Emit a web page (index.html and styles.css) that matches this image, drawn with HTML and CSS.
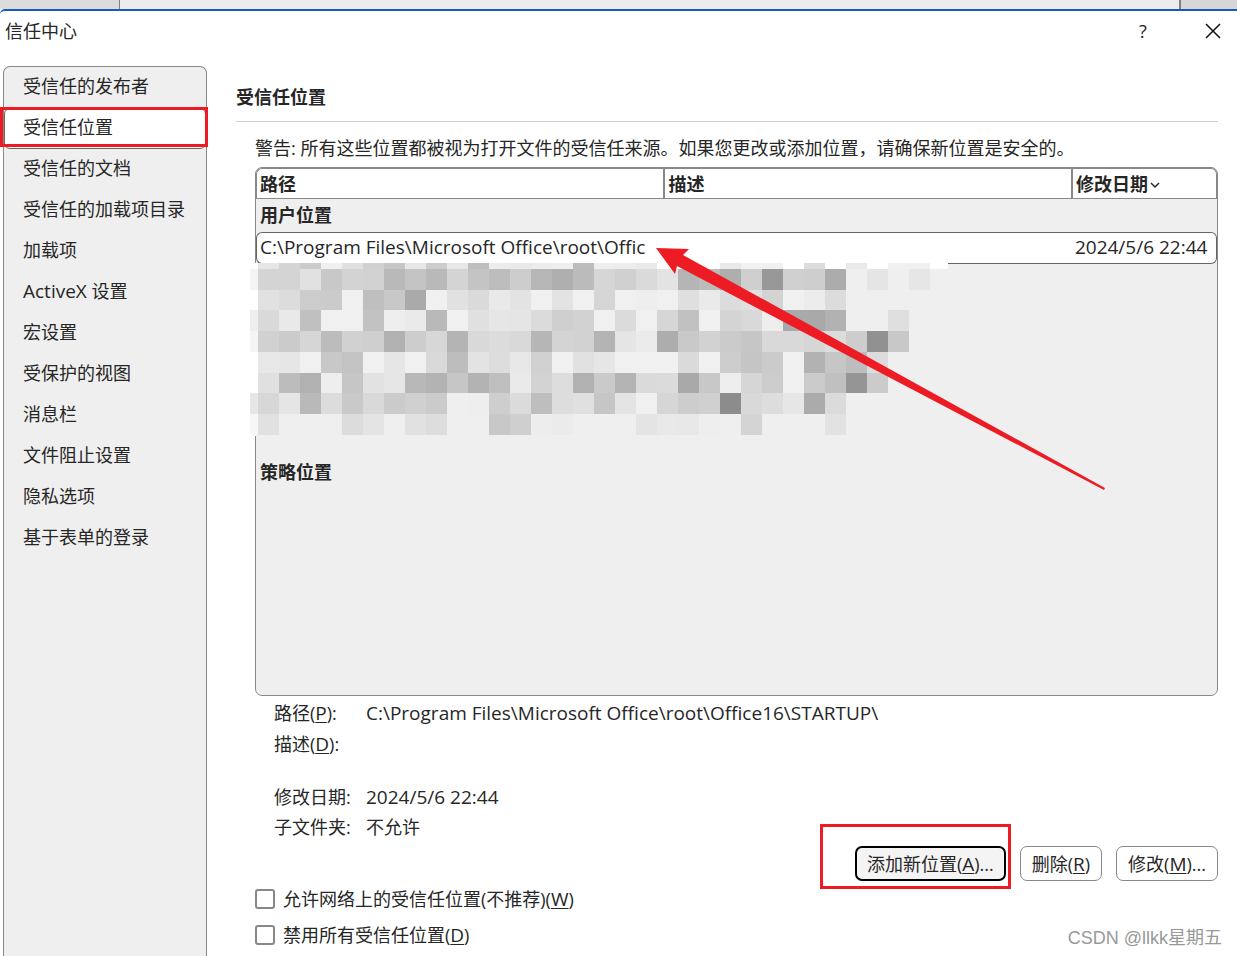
FILE: index.html
```html
<!DOCTYPE html>
<html lang="zh-CN">

<head>
    <meta charset="UTF-8">
    <title>信任中心</title>
    <link rel="stylesheet" href="styles.css">
</head>

<body>
    <div class="backdrop">
        <div class="backdrop-page"></div>
    </div>
    <div class="dialog">
        <header class="titlebar">
            <span class="title">信任中心</span>
            <button type="button" class="title-btn help" aria-label="帮助">?</button>
            <button type="button" class="title-btn" aria-label="关闭">
                <svg width="16" height="16" viewBox="0 0 16 16"><path d="M1 1 L15 15 M15 1 L1 15" fill="none" stroke="#111" stroke-width="1.5"/></svg>
            </button>
        </header>
        <div class="main">
            <nav class="sidebar">
                <a href="#">受信任的发布者</a>
                <a href="#" class="selected">受信任位置</a>
                <a href="#">受信任的文档</a>
                <a href="#">受信任的加载项目录</a>
                <a href="#">加载项</a>
                <a href="#"><span class="latin">ActiveX</span> 设置</a>
                <a href="#">宏设置</a>
                <a href="#">受保护的视图</a>
                <a href="#">消息栏</a>
                <a href="#">文件阻止设置</a>
                <a href="#">隐私选项</a>
                <a href="#">基于表单的登录</a>
            </nav>
            <section class="content">
                <h1>受信任位置</h1>
                <div class="body">
                    <p class="warning">警告: 所有这些位置都被视为打开文件的受信任来源。如果您更改或添加位置，请确保新位置是安全的。</p>
                    <div class="list">
                        <table>
                            <thead>
                                <tr>
                                    <th class="wide">路径</th>
                                    <th class="wide">描述</th>
                                    <th>修改日期<svg class="sort" width="10" height="8" viewBox="0 0 10 8"><path d="M1 1 L5 5 L9 1" fill="none" stroke="#262626" stroke-width="1.5"/></svg></th>
                                </tr>
                            </thead>
                            <tbody>
                                <tr class="group"><td colspan="3">用户位置</td></tr>
                                <tr class="active">
                                    <td class="latin">C:\Program Files\Microsoft Office\root\Offic</td>
                                    <td></td>
                                    <td class="latin">2024/5/6 22:44</td>
                                </tr>
                                <tr class="hidden-rows"><td colspan="3"><svg id="mosaic" class="mosaic" width="698" height="173"></svg></td></tr>
                                <tr class="group"><td colspan="3">策略位置</td></tr>
                            </tbody>
                        </table>
                        <svg class="arrow" width="452" height="246" viewBox="0 0 452 246"><path d="M1 1 L34 2 L28 8 L450 241 L449 243 L22 19 L20 27 Z" fill="#ed1c24"/></svg>
                    </div>
                    <dl class="details">
                        <dt>路径(<u>P</u>):</dt>
                        <dd class="latin">C:\Program Files\Microsoft Office\root\Office16\STARTUP\</dd>
                        <dt>描述(<u>D</u>):</dt>
                        <dd></dd>
                        <dt class="later">修改日期:</dt>
                        <dd class="latin later">2024/5/6 22:44</dd>
                        <dt>子文件夹:</dt>
                        <dd>不允许</dd>
                    </dl>
                    <div class="buttons">
                        <div class="marked"><button type="button" class="default">添加新位置(<u>A</u>)...</button></div>
                        <button type="button">删除(<u>R</u>)</button>
                        <button type="button">修改(<u>M</u>)...</button>
                    </div>
                    <div class="checks">
                        <label><input type="checkbox"><span>允许网络上的受信任位置(不推荐)(<u>W</u>)</span></label>
                        <label><input type="checkbox"><span>禁用所有受信任位置(<u>D</u>)</span></label>
                    </div>
                </div>
            </section>
        </div>
        <div class="watermark">CSDN @llkk星期五</div>
    </div>
    <script src="mosaic.js"></script>
</body>

</html>
```
FILE: styles.css
```css
*,
*::after {
    box-sizing: border-box;
}

body {
    margin: 0;
    height: 100vh;
    display: flex;
    flex-direction: column;
    overflow: hidden;
    background-color: #fff;
    color: #262626;
    font-family: "Open Sans", "Noto Sans CJK SC", sans-serif;
    font-size: 18px;
    line-height: 30px;
}

button,
input {
    font: inherit;
    color: inherit;
}

u {
    font-size: 19px;
    text-underline-offset: 2px;
    text-decoration-thickness: 1px;
}

.latin {
    font-size: 19px;
}

/* window behind the dialog */
.backdrop {
    flex: none;
    height: 9px;
    padding: 0 56px 0 119px;
    background: linear-gradient(90deg, #dcdcdc, #d6d6d6);
}

.backdrop-page {
    height: 9px;
    border-left: 1px solid #808080;
    border-right: 2px solid #808080;
    background-color: #ededed;
}

.dialog {
    position: relative;
    flex: 1;
    min-height: 0;
    display: flex;
    flex-direction: column;
    border-top: 2px solid #185abd;
    border-top-left-radius: 5px;
    background-color: #fff;
}

.titlebar {
    display: flex;
    align-items: center;
    height: 40px;
    padding: 0 7px 0 5px;
}

.title {
    flex: 1;
}

.title-btn {
    display: flex;
    align-items: center;
    justify-content: center;
    width: 34px;
    height: 34px;
    margin-left: 36px;
    padding: 0;
    border: none;
    background: none;
}

.main {
    flex: 1;
    min-height: 0;
    display: flex;
    padding: 15px 19px 0 3px;
}

.sidebar {
    flex: none;
    width: 204px;
    border: 1px solid #888;
    border-bottom: none;
    border-radius: 7px 7px 0 0;
    background-color: #efefef;
}

.sidebar a {
    display: block;
    height: 41px;
    padding-left: 19px;
    color: inherit;
    line-height: 38px;
    text-decoration: none;
}

.sidebar a.selected {
    position: relative;
    border: 1px solid #666;
    border-radius: 6px;
    padding-left: 18px;
    background-color: #fff;
    line-height: 36px;
}

.sidebar a.selected::after {
    content: "";
    position: absolute;
    top: -2px;
    left: -5px;
    right: -3px;
    height: 40px;
    border: 3px solid #ed1c24;
}

.content {
    flex: 1;
    min-width: 0;
    padding-left: 29px;
}

h1 {
    margin: 0;
    padding: 16px 0 9px;
    border-bottom: 1px solid #d0d0d0;
    font-size: 18px;
    line-height: 30px;
}

.body {
    padding-left: 19px;
}

.warning {
    margin: 0;
    padding: 11px 0 4px;
    white-space: nowrap;
}

.list {
    position: relative;
    height: 529px;
    border: 1px solid #888;
    border-radius: 7px;
    background-color: #efefef;
}

table {
    width: 100%;
    table-layout: fixed;
    border-collapse: separate;
    border-spacing: 0;
    line-height: 28px;
}

th,
td {
    padding: 0 4px;
    text-align: left;
    white-space: nowrap;
}

th {
    height: 31px;
    border-top: 1px solid #888;
    border-bottom: 1px solid #888;
    border-left: 2px solid #888;
    padding: 0 3px;
    background-color: #fff;
}

th:first-child {
    border-left-width: 1px;
    border-top-left-radius: 6px;
}

th:last-child {
    border-right: 1px solid #888;
    border-top-right-radius: 6px;
}

th.wide {
    width: 42.4%;
}

.sort {
    margin-left: 2px;
    vertical-align: middle;
}

.group td {
    height: 33px;
    padding-bottom: 2px;
    font-weight: 700;
}

.active td {
    height: 32px;
    border-top: 1px solid #666;
    border-bottom: 1px solid #666;
    padding-bottom: 2px;
    background-color: #fff;
}

.active td:first-child {
    border-left: 1px solid #666;
    border-radius: 6px 0 0 6px;
    padding-left: 3px;
}

.active td:last-child {
    border-right: 1px solid #666;
    border-radius: 0 6px 6px 0;
}

.hidden-rows td {
    position: relative;
    height: 192px;
}

.mosaic {
    position: absolute;
    top: -1px;
    left: -6px;
}

.arrow {
    position: absolute;
    top: 79px;
    left: 399px;
}

.details {
    display: grid;
    grid-template-columns: 92px 1fr;
    grid-auto-rows: minmax(31px, auto);
    margin: 0;
    padding: 2px 0 0 19px;
}

.details dd {
    margin: 0;
}

.details .later {
    margin-top: 22px;
}

.buttons {
    display: flex;
    justify-content: flex-end;
    gap: 14px;
    margin-top: 3px;
}

.buttons button {
    height: 35px;
    padding: 0 11px;
    border: 1px solid #888;
    border-radius: 7px;
    background-color: #fff;
    line-height: 30px;
}

.buttons button.default {
    border: 2px solid #000;
    padding: 0 10px;
    background-color: #f4f4f4;
}

.marked {
    position: relative;
}

.marked::after {
    content: "";
    position: absolute;
    top: -22px;
    right: -5px;
    bottom: -8px;
    left: -35px;
    border: 3px solid #ed1c24;
}

.checks label {
    display: flex;
    align-items: center;
    height: 36px;
}

.checks input {
    appearance: none;
    width: 20px;
    height: 20px;
    margin: 0 8px 0 0;
    border: 2px solid #888;
    border-radius: 3px;
    background-color: #fff;
}

.watermark {
    position: absolute;
    right: 15px;
    bottom: 3px;
    color: #999;
    font-family: "Liberation Sans", "Noto Sans CJK SC", sans-serif;
}
```
FILE: mosaic.js
```js
// Grey levels of the blurred rows; the first value is the narrow strip on the left
var rows = [
    "ff e6 d4 cb f0 e0 d1 c6 e7 cc e7 be ec e9 ec ee bc ee ed e9 ff ff ff e9 f2 f0 ff dc ff e9 ff f0 f0 ff",
    "f4 d4 d4 e1 c8 d3 d2 b9 c4 b9 d4 c4 bd cd b7 af bb d6 d0 da e3 b5 bb ae cf 98 d0 ce ac ef e5 ef e6 ef",
    "ff e1 dc cc cb f0 bf c8 aa f0 e1 da e9 e3 f0 e3 f0 d5 f0 ee f0 df ea dc e0 d3 f0 ec dc",
    "ee d9 e9 c0 f0 f0 c2 ee ea b9 f0 e0 e6 e5 db cf d2 f0 db f0 d6 c1 f0 d4 d9 ee a9 a9 b2 ef ef df",
    "f5 d1 cb d6 bc d1 cf b1 cd d7 b4 d9 dc d9 b6 d4 d2 b4 e5 eb ad c9 d2 cb c6 d9 d9 d6 dc cd 91 c8",
    "ff e7 e6 f0 c8 c3 f0 e6 f0 d9 bd e3 dd e8 d1 f0 e1 e6 f0 f0 f0 da f0 cd c5 cb f0 b2 c6 bd dc",
    "ff e0 bc b1 ee c6 e2 e6 b8 b3 c6 b3 bf ea d3 dd b1 ca b4 da db a9 c8 ee d6 cc f0 cb c0 95 cb",
    "e6 d7 e5 b9 dc c9 d9 cb d0 cb ef ee ce db be dd e0 c6 e4 f0 d6 cd d0 8c d9 dd e6 ab db",
    "f7 e1 ef ef ef dc e4 ef e1 dd ef ef c8 cf ed eb ef ef ef e4 e9 e8 ee ef d4 ef ef ef e2"
];
var tops = [0, 6, 27, 47, 68, 89, 110, 130, 151, 172];
var mosaic = document.getElementById("mosaic");

function addRect(x, y, width, height, color) {
    var rect = document.createElementNS("http://www.w3.org/2000/svg", "rect");
    rect.setAttribute("x", x);
    rect.setAttribute("y", y);
    rect.setAttribute("width", width);
    rect.setAttribute("height", height);
    rect.setAttribute("fill", color);
    mosaic.appendChild(rect);
}

addRect(0, 0, 6, 173, "#fff");
for (var r = 0; r < rows.length; r++) {
    var levels = rows[r].split(" ");
    for (var c = 0; c < levels.length; c++) {
        var x = c == 0 ? 0 : 8 + (c - 1) * 21;
        var width = c == 0 ? 8 : 21;
        addRect(x, tops[r], width, tops[r + 1] - tops[r], "#" + levels[c] + levels[c] + levels[c]);
    }
}
```
